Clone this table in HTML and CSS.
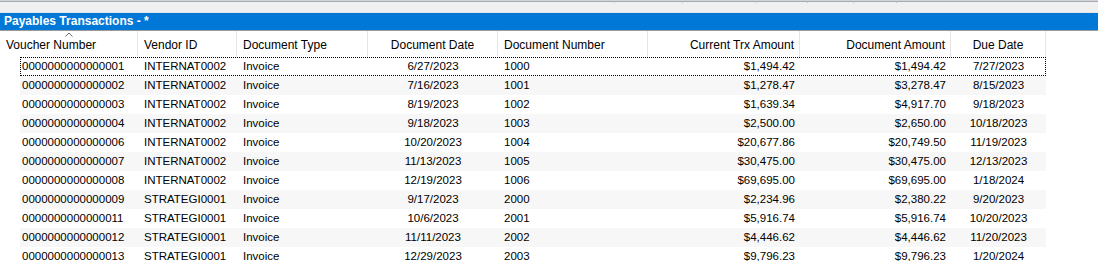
FILE: index.html
```html
<!DOCTYPE html>
<html lang="en">
<head>
    <meta charset="UTF-8">
    <title>Payables Transactions</title>
    <link rel="stylesheet" href="styles.css">
</head>
<body>
    <div class="toolbar-strip">
        <div class="strip-ticks">
            <span></span><span></span><span></span><span></span><span></span><span></span>
        </div>
    </div>

    <div class="window-title">Payables Transactions - *</div>

    <div class="grid">
        <div class="grid-header">
            <div class="hcell left">
                Voucher Number
                <svg class="sort-caret" width="8" height="5" viewBox="0 0 8 5">
                    <polyline points="0.5,4.5 4,1 7.5,4.5" fill="none" stroke="#6d6d6d" stroke-width="1"/>
                </svg>
            </div>
            <div class="hcell left">Vendor ID</div>
            <div class="hcell left">Document Type</div>
            <div class="hcell center">Document Date</div>
            <div class="hcell left">Document Number</div>
            <div class="hcell right">Current Trx Amount</div>
            <div class="hcell right">Document Amount</div>
            <div class="hcell center">Due Date</div>
        </div>

        <div class="grid-body">
            <div class="grid-row focused">
                <div class="cell first">0000000000000001</div><div class="cell">INTERNAT0002</div><div class="cell">Invoice</div><div class="cell center">6/27/2023</div><div class="cell">1000</div><div class="cell right">$1,494.42</div><div class="cell right">$1,494.42</div><div class="cell center">7/27/2023</div>
            </div>
            <div class="grid-row">
                <div class="cell first">0000000000000002</div><div class="cell">INTERNAT0002</div><div class="cell">Invoice</div><div class="cell center">7/16/2023</div><div class="cell">1001</div><div class="cell right">$1,278.47</div><div class="cell right">$3,278.47</div><div class="cell center">8/15/2023</div>
            </div>
            <div class="grid-row">
                <div class="cell first">0000000000000003</div><div class="cell">INTERNAT0002</div><div class="cell">Invoice</div><div class="cell center">8/19/2023</div><div class="cell">1002</div><div class="cell right">$1,639.34</div><div class="cell right">$4,917.70</div><div class="cell center">9/18/2023</div>
            </div>
            <div class="grid-row">
                <div class="cell first">0000000000000004</div><div class="cell">INTERNAT0002</div><div class="cell">Invoice</div><div class="cell center">9/18/2023</div><div class="cell">1003</div><div class="cell right">$2,500.00</div><div class="cell right">$2,650.00</div><div class="cell center">10/18/2023</div>
            </div>
            <div class="grid-row">
                <div class="cell first">0000000000000006</div><div class="cell">INTERNAT0002</div><div class="cell">Invoice</div><div class="cell center">10/20/2023</div><div class="cell">1004</div><div class="cell right">$20,677.86</div><div class="cell right">$20,749.50</div><div class="cell center">11/19/2023</div>
            </div>
            <div class="grid-row">
                <div class="cell first">0000000000000007</div><div class="cell">INTERNAT0002</div><div class="cell">Invoice</div><div class="cell center">11/13/2023</div><div class="cell">1005</div><div class="cell right">$30,475.00</div><div class="cell right">$30,475.00</div><div class="cell center">12/13/2023</div>
            </div>
            <div class="grid-row">
                <div class="cell first">0000000000000008</div><div class="cell">INTERNAT0002</div><div class="cell">Invoice</div><div class="cell center">12/19/2023</div><div class="cell">1006</div><div class="cell right">$69,695.00</div><div class="cell right">$69,695.00</div><div class="cell center">1/18/2024</div>
            </div>
            <div class="grid-row">
                <div class="cell first">0000000000000009</div><div class="cell">STRATEGI0001</div><div class="cell">Invoice</div><div class="cell center">9/17/2023</div><div class="cell">2000</div><div class="cell right">$2,234.96</div><div class="cell right">$2,380.22</div><div class="cell center">9/20/2023</div>
            </div>
            <div class="grid-row">
                <div class="cell first">0000000000000011</div><div class="cell">STRATEGI0001</div><div class="cell">Invoice</div><div class="cell center">10/6/2023</div><div class="cell">2001</div><div class="cell right">$5,916.74</div><div class="cell right">$5,916.74</div><div class="cell center">10/20/2023</div>
            </div>
            <div class="grid-row">
                <div class="cell first">0000000000000012</div><div class="cell">STRATEGI0001</div><div class="cell">Invoice</div><div class="cell center">11/11/2023</div><div class="cell">2002</div><div class="cell right">$4,446.62</div><div class="cell right">$4,446.62</div><div class="cell center">11/20/2023</div>
            </div>
            <div class="grid-row">
                <div class="cell first">0000000000000013</div><div class="cell">STRATEGI0001</div><div class="cell">Invoice</div><div class="cell center">12/29/2023</div><div class="cell">2003</div><div class="cell right">$9,796.23</div><div class="cell right">$9,796.23</div><div class="cell center">1/20/2024</div>
            </div>
        </div>
    </div>
</body>
</html>
```

FILE: styles.css
```css
* {
    margin: 0;
    padding: 0;
    box-sizing: border-box;
}

body {
    font-family: "Liberation Sans", Arial, sans-serif;
    font-size: 12px;
    color: #000;
    background: #fff;
    overflow: hidden;
}

/* strip of the form above the window title */
.toolbar-strip {
    height: 13px;
    background: #f0f0f0;
    border-top: 1px solid #d4d4d4;
    border-bottom: 1px solid #e4e4e4;
    position: relative;
}

.toolbar-strip::before {
    content: "";
    display: block;
    height: 1px;
    background: #a3abb8;
}

.strip-ticks span {
    position: absolute;
    top: 0;
    width: 1px;
    height: 2px;
    background: #b8bcc4;
}

.strip-ticks span:nth-child(1) { left: 614px; }
.strip-ticks span:nth-child(2) { left: 682px; }
.strip-ticks span:nth-child(3) { left: 756px; }
.strip-ticks span:nth-child(4) { left: 807px; }
.strip-ticks span:nth-child(5) { left: 853px; }
.strip-ticks span:nth-child(6) { left: 896px; }

.window-title {
    height: 18px;
    line-height: 17px;
    background: #0078d7;
    color: #fff;
    font-size: 12px;
    font-weight: bold;
    padding-left: 4px;
    border-bottom: 1px solid #9a9a9a;
}

/* grid */
.grid-header,
.grid-row {
    display: grid;
}

.grid-header {
    grid-template-columns: 138px 99px 131px 130px 150px 152px 151px 95px;
    width: 1046px;
    height: 26px;
}

.hcell {
    position: relative;
    padding: 7px 6px 0;
    border-right: 1px solid #e5e5e5;
    white-space: nowrap;
}

.sort-caret {
    position: absolute;
    left: 65px;
    top: 1px;
}

.grid-body {
    margin-left: 20px;
    width: 1026px;
}

.grid-row {
    grid-template-columns: 118px 99px 131px 130px 150px 152px 151px 95px;
    height: 19px;
    line-height: 19px;
    font-size: 11.5px;
}

.grid-row:nth-child(even) {
    background: #f7f7f7;
}

.grid-row.focused {
    outline: 1px dotted #000;
    outline-offset: -1px;
}

.cell {
    padding: 0 6px;
    white-space: nowrap;
    overflow: hidden;
}

.cell.first {
    padding-left: 2px;
}

.left { text-align: left; }
.center { text-align: center; }
.right { text-align: right; }

.cell.right,
.hcell.right {
    padding-right: 5px;
}
```
